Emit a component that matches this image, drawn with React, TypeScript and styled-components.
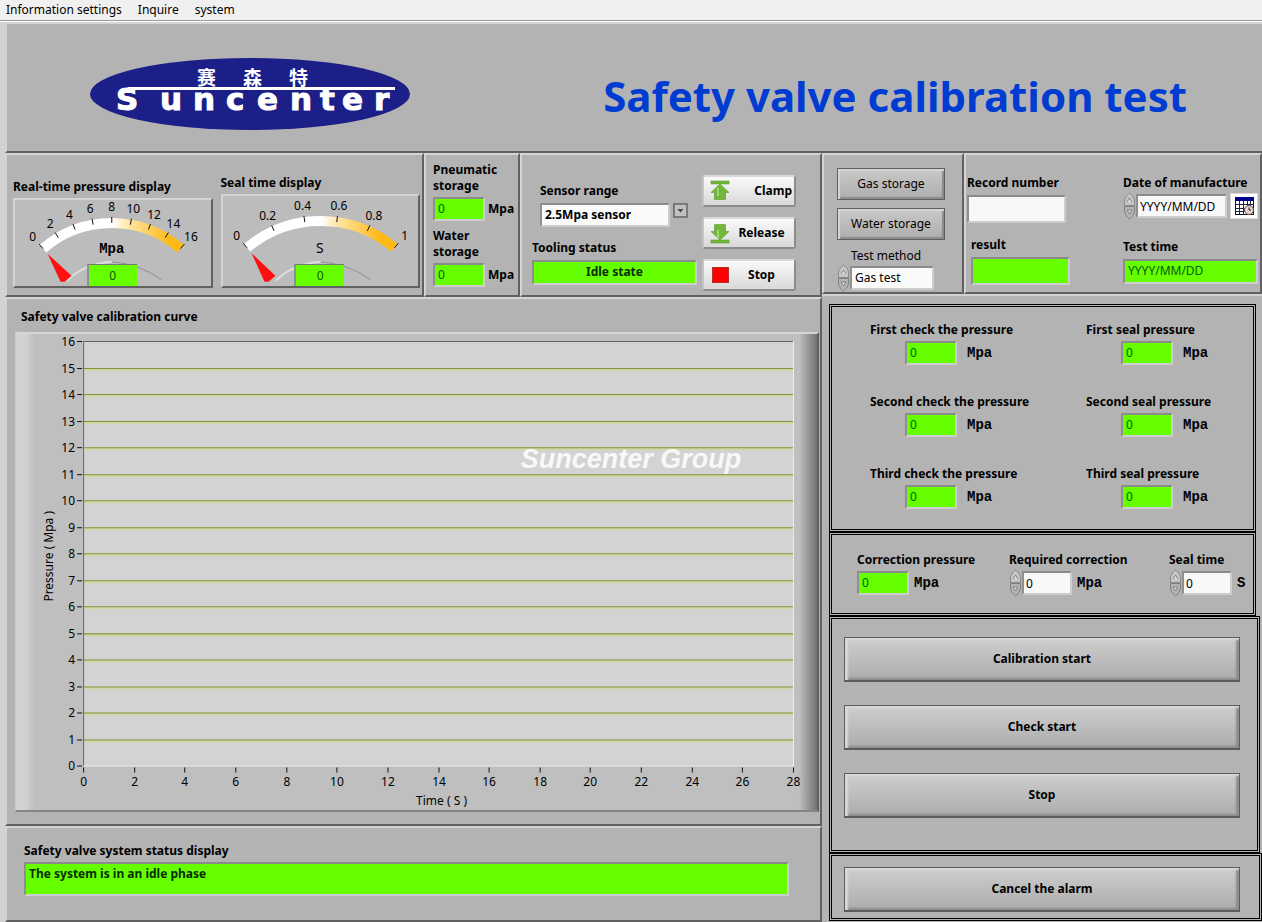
import React from "react";
import styled, { createGlobalStyle, css } from "styled-components";

const GREEN = "#66ff00";
const FONT = '"Noto Sans", "Noto Sans CJK SC", sans-serif';
const MONO = '"Liberation Mono", monospace';

const GlobalStyle = createGlobalStyle`
  * { box-sizing: border-box; }
  body { margin: 0; background: #b3b3b3; font: 12px/16px ${FONT}; color: #000; }
  button, input, select, output { font: inherit; color: inherit; }
`;

const Page = styled.div`
  display: flex;
  flex-direction: column;
  min-height: 100vh;
`;

const MenuBar = styled.nav`
  display: flex;
  gap: 16px;
  height: 21px;
  padding: 0 6px;
  background: #f0f0f0;
  border-bottom: 1px solid #9a9a9a;
`;

const MenuItem = styled.button`
  padding: 0;
  border: 0;
  background: none;
  line-height: 18px;
`;

const bevel = css`
  border: 2px solid;
  border-color: #d4d4d4 #616161 #616161 #d4d4d4;
`;

const Body = styled.main`
  flex: 1;
  display: flex;
  flex-direction: column;
  padding-left: 5px;
  border-top: 1px solid #ffffff;
  background: linear-gradient(90deg, #d2d2d2 5px, #b3b3b3 5px);
`;

const Header = styled.header`
  ${bevel}
  display: flex;
  align-items: center;
  justify-content: space-between;
  height: 131px;
  padding: 12px 75px 0 83px;
  border-right: 0;
`;

const Title = styled.h1`
  margin: 0;
  padding-top: 4px;
  font-size: 42px;
  line-height: 56px;
  font-weight: 700;
  color: #003cd2;
  white-space: nowrap;
`;

const Columns = styled.div`
  flex: 1;
  display: grid;
  grid-template-columns: minmax(0, 817fr) minmax(0, 440fr);
`;

const Column = styled.div`
  display: flex;
  flex-direction: column;
  min-width: 0;
`;

const PanelRow = styled.div<{ $height: number; $columns: string }>`
  display: grid;
  grid-template-columns: ${(p) => p.$columns};
  min-height: ${(p) => p.$height}px;
`;

const Panel = styled.section<{ $fill?: boolean; $pad: string }>`
  ${bevel}
  flex: ${(p) => (p.$fill ? "1" : "none")};
  min-width: 0;
  padding: ${(p) => p.$pad};
`;

const GaugesPanel = styled(Panel)`
  display: flex;
  align-items: flex-end;
  gap: 8px;
`;

const SensorPanel = styled(Panel)`
  display: flex;
  align-items: flex-start;
  gap: 5px;
`;

const Caption = styled.label<{ $light?: boolean }>`
  display: block;
  font-weight: ${(p) => (p.$light ? 400 : 700)};
  line-height: 16px;
  white-space: nowrap;
`;

const sunken = css`
  border: 2px solid;
  border-color: #8b8b8b #cdcdcd #cdcdcd #8f8f8f;
  border-radius: 0;
`;

const Readout = styled.output<{ $width?: string; $height?: number; $bold?: boolean; $center?: boolean }>`
  ${sunken}
  display: block;
  flex: none;
  width: ${(p) => p.$width ?? "52px"};
  height: ${(p) => p.$height ?? 24}px;
  padding: 1px 3px;
  background: ${GREEN};
  color: ${(p) => (p.$bold ? "#062d00" : "#0a5a0a")};
  font-weight: ${(p) => (p.$bold ? 700 : 400)};
  line-height: 18px;
  text-align: ${(p) => (p.$center ? "center" : "left")};
`;

const TextField = styled.input<{ $width: string; $height?: number }>`
  ${sunken}
  flex: none;
  width: ${(p) => p.$width};
  height: ${(p) => p.$height ?? 24}px;
  padding: 0 2px;
  background: #f8f8f8;
`;

const Picker = styled.select<{ $width: string; $bold?: boolean }>`
  ${sunken}
  appearance: none;
  width: ${(p) => p.$width};
  height: 24px;
  padding: 0 3px;
  background: #fafafa;
  font-weight: ${(p) => (p.$bold ? 700 : 400)};
`;

const Unit = styled.span<{ $sans?: boolean }>`
  font: ${(p) => (p.$sans ? `700 12px/16px ${FONT}` : `700 14px/16px ${MONO}`)};
`;

const Line = styled.div<{ $gap?: number; $indent?: number; $top?: boolean }>`
  display: flex;
  align-items: ${(p) => (p.$top ? "flex-start" : "center")};
  gap: ${(p) => p.$gap ?? 0}px;
  padding-left: ${(p) => p.$indent ?? 0}px;
`;

const Stack = styled.div<{ $gap?: number; $pad?: string; $width?: string }>`
  display: flex;
  flex-direction: column;
  gap: ${(p) => p.$gap ?? 0}px;
  padding: ${(p) => p.$pad ?? "0"};
  width: ${(p) => p.$width ?? "auto"};
`;

/* Gauges */

const GaugeBlock = styled.div`
  flex: 1 1 0;
  min-width: 0;
`;

const GaugeFace = styled.div`
  ${bevel}
  position: relative;
  margin-top: 3px;
  background: #bcbcbc;

  svg { display: block; width: 100%; overflow: visible; }
`;

const GaugeValue = styled.output`
  position: absolute;
  bottom: 0;
  left: 50%;
  width: 50px;
  height: 22px;
  margin-left: -26px;
  border-top: 1px solid #777777;
  border-left: 2px solid #8f8f8f;
  background: ${GREEN};
  color: #0a5a0a;
  line-height: 22px;
  text-align: center;
`;

type GaugeProps = {
  id: string;
  title: string;
  unit: string;
  monoUnit?: boolean;
  marks: string[];
  cx: number;
  cy: number;
  radius: number;
  span: number;
  height: number;
};

function Gauge({ id, title, unit, monoUnit, marks, cx, cy, radius, span, height }: GaugeProps) {
  const at = (deg: number, r: number): [number, number] => {
    const a = (deg * Math.PI) / 180;
    return [cx + r * Math.sin(a), cy - r * Math.cos(a)];
  };
  const arc = (from: number, to: number, r: number) => {
    const [x1, y1] = at(from, r);
    const [x2, y2] = at(to, r);
    return `M${x1} ${y1}A${r} ${r} 0 0 1 ${x2} ${y2}`;
  };
  const hub = height - 24;
  const [tx, ty] = at(-span, radius - 12);
  return (
    <GaugeBlock>
      <Caption as="div" id={id}>{title}</Caption>
      <GaugeFace>
        <svg viewBox={`0 0 196 ${height}`} aria-hidden="true">
          <defs>
            <linearGradient id={`${id}-band`} gradientUnits="userSpaceOnUse" x1={cx} y1="0" x2={cx + 60} y2="0">
              <stop offset="0" stopColor="#ffffff" />
              <stop offset="0.3" stopColor="#ffe4a0" />
              <stop offset="1" stopColor="#ffb814" />
            </linearGradient>
          </defs>
          <path d={arc(-span, span, radius - 5)} fill="none" stroke={`url(#${id}-band)`} strokeWidth="10" />
          <path
            d={`M${cx - 45} ${height - 5}Q${cx - 28} ${hub + 2} ${cx} ${hub}`}
            fill="none" stroke="#dedede" strokeWidth="2"
          />
          <path
            d={`M${cx} ${hub}Q${cx + 28} ${hub + 2} ${cx + 50} ${height - 6}`}
            fill="none" stroke="#909090"
          />
          <polygon
            points={`${tx},${ty} ${tx + 13},${height - 4} ${tx + 17},${height - 4} ${tx + 24},${height - 10}`}
            fill="#ff1010"
          />
          {marks.map((mark, i) => {
            const deg = -span + (2 * span * i) / (marks.length - 1);
            const [x1, y1] = at(deg, radius + 1);
            const [x2, y2] = at(deg, radius - 5);
            const [lx, ly] = at(deg, radius + 11);
            return (
              <g key={mark}>
                <path d={`M${x1} ${y1}L${x2} ${y2}`} stroke="#111111" />
                <text x={lx} y={ly + 4} fontSize="12" textAnchor="middle">{mark}</text>
              </g>
            );
          })}
          <text
            x={97} y={height - 33} textAnchor="middle" fontSize="14"
            fontFamily={monoUnit ? MONO : FONT} fontWeight={monoUnit ? 700 : 400}
          >
            {unit}
          </text>
        </svg>
        <GaugeValue aria-labelledby={id}>0</GaugeValue>
      </GaugeFace>
    </GaugeBlock>
  );
}

/* Buttons */

const ToolButton = styled.button<{ $end?: boolean }>`
  display: flex;
  align-items: center;
  width: 94px;
  height: 32px;
  padding: 0 2px 0 5px;
  border: 2px solid;
  border-color: #d9d9d9 #8c8c8c #8c8c8c #c4c4c4;
  border-radius: 3px;
  background: linear-gradient(#fafafa, #d9d9d9);
  font-weight: 700;

  svg { flex: none; display: block; }
  span { flex: 1; text-align: ${(p) => (p.$end ? "right" : "center")}; }
`;

const StorageButton = styled.button`
  width: 108px;
  height: 32px;
  padding: 0;
  border: 1px solid #5f5f5f;
  background: linear-gradient(#c9c9c9, #adadad);
  box-shadow: inset 2px 2px 1px #d6d6d6, inset -2px -2px 1px #8a8a8a;
`;

const ActionButton = styled.button`
  width: 100%;
  height: 45px;
  padding: 0;
  border: 1px solid #5c5c5c;
  border-width: 1px 1px 2px 1px;
  background: linear-gradient(#cecece, #acacac);
  box-shadow: inset 3px 2px 2px #d8d8d8, inset -3px -2px 2px #8c8c8c;
  font-weight: 700;
`;

const CalendarButton = styled.button`
  flex: none;
  width: 28px;
  height: 26px;
  padding: 2px 4px;
  border: 1px solid #d8d8d8;
  background: #ffffff;

  svg { display: block; }
`;

const ArrowIcon = ({ down }: { down?: boolean }) => (
  <svg width="22" height="22" viewBox="0 0 22 22" aria-hidden="true">
    <g transform={down ? "matrix(1 0 0 -1 0 22)" : undefined} fill="#72b63a" stroke="#5d9c2e" strokeWidth="0.6">
      <rect x="2" y="1" width="18" height="3" />
      <path d="M11 4L20 12.500H16.500V19.500H5.500V12.500H2Z" />
    </g>
    <path d="M9 8V16" stroke="#a4d47a" strokeWidth="2" />
  </svg>
);

const StopIcon = () => (
  <svg width="22" height="22" viewBox="0 0 22 22" aria-hidden="true">
    <rect x="3.500" y="3.500" width="16" height="15" fill="#ff0000" stroke="#b83030" />
  </svg>
);

const CalendarIcon = () => (
  <svg width="19" height="20" viewBox="0 0 19 20" aria-hidden="true">
    <rect x="0.500" y="1.500" width="18" height="17" fill="#ffffff" stroke="#101030" />
    <rect x="0" y="1" width="19" height="4" fill="#000088" />
    <path d="M1 8.500H18M1 12.500H18M1 15.500H18M4.500 5V18M8.500 5V18M12.500 5V18M15.500 5V18" stroke="#222244" />
    <circle cx="14" cy="14" r="4.500" fill="#ead2cc" stroke="#6a5555" />
    <path d="M14 11.500V14H16" fill="none" stroke="#222222" />
  </svg>
);

const SpinnerSvg = styled.svg`
  display: block;
  flex: none;
`;

const Spinner = () => (
  <SpinnerSvg width="13" height="28" viewBox="0 0 13 28" aria-hidden="true">
    <path d="M6.500 1C9 3 11.500 6 11.500 9V13.500H1.500V9C1.500 6 4 3 6.500 1Z" fill="#c6c6c6" stroke="#8a8a8a" />
    <path d="M6.500 27C9 25 11.500 22 11.500 19V14.500H1.500V19C1.500 22 4 25 6.500 27Z" fill="#b4b4b4" stroke="#808080" />
    <path d="M4 10L6.500 6L9 10M4 18H9L6.500 22Z" fill="#dedede" stroke="#6f6f6f" strokeWidth="0.8" />
  </SpinnerSvg>
);

const DropIcon = () => (
  <SpinnerSvg width="15" height="15" viewBox="0 0 15 15" aria-hidden="true">
    <rect x="1" y="1" width="13" height="13" fill="#c0c0c0" stroke="#666666" strokeWidth="1.500" />
    <path d="M4.500 6H10.500L7.500 9.500Z" fill="#444444" />
  </SpinnerSvg>
);

/* Logo */

const Logo = () => (
  <svg width="320" height="72" viewBox="0 0 320 72" role="img" aria-label="Suncenter">
    <ellipse cx="160" cy="36" rx="160" ry="36" fill="#1c1f88" />
    <rect x="38" y="29" width="267" height="3" fill="#ffffff" />
    <text x="107 153 199" y="27" fill="#ffffff" fontSize="19" fontWeight="700" fontFamily='"Noto Sans CJK SC", sans-serif'>
      赛森特
    </text>
    <text
      x="26 70 103 136 167 200 230 252 284" y="52" fill="#ffffff" stroke="#ffffff" strokeWidth="1"
      fontSize="31" fontWeight="700" fontFamily='"DejaVu Sans", sans-serif'
    >
      Suncenter
    </text>
  </svg>
);

/* Calibration curve */

const ChartFrame = styled.div`
  border: solid;
  border-width: 2px 2px 2px 1px;
  border-color: #d6d6d6 #5e5e5e #858585 #cccccc;
  background: linear-gradient(90deg, #d2d2d2 10px, #bfbfbf 18px, #bfbfbf calc(100% - 18px), #727272);

  svg { display: block; width: 100%; }
`;

const PLOT = { left: 67, top: 7, right: 776, bottom: 431 };

function Chart() {
  const yMarks = Array.from({ length: 17 }, (_, i) => i);
  const xMarks = Array.from({ length: 15 }, (_, i) => i * 2);
  const yAt = (v: number) => Math.round(PLOT.bottom - (v / 16) * (PLOT.bottom - PLOT.top)) + 0.5;
  const xAt = (v: number) => Math.round(PLOT.left + (v / 28) * (PLOT.right - PLOT.left)) + 0.5;
  return (
    <ChartFrame>
      <svg viewBox="0 0 800 475" role="img" aria-label="Safety valve calibration curve">
        <rect x={PLOT.left} y={PLOT.top} width={PLOT.right - PLOT.left} height={PLOT.bottom - PLOT.top} fill="#d3d3d3" />
        {yMarks.map((v) => (
          <g key={v}>
            {v > 0 && v < 16 && (
              <>
                <path d={`M${PLOT.left} ${yAt(v) + 1}H${PLOT.right}`} stroke="#d2d6a8" strokeWidth="3" />
                <path d={`M${PLOT.left} ${yAt(v)}H${PLOT.right}`} stroke="#849340" />
              </>
            )}
            <path d={`M${PLOT.left - 6} ${yAt(v)}h5`} stroke="#111111" />
            <text x={PLOT.left - 8} y={yAt(v) + 4} fontSize="12" textAnchor="end">{v}</text>
          </g>
        ))}
        <path d={`M${PLOT.left + 0.5} ${PLOT.bottom}V${PLOT.top + 0.5}H${PLOT.right}`} fill="none" stroke="#666666" />
        <path d={`M${PLOT.left + 1} ${PLOT.bottom + 0.5}H${PLOT.right + 0.5}V${PLOT.top}`} fill="none" stroke="#efefef" />
        {xMarks.map((v) => (
          <g key={v}>
            <path d={`M${xAt(v)} ${PLOT.bottom + 2}v5`} stroke="#111111" />
            <text x={xAt(v)} y={PLOT.bottom + 20} fontSize="12" textAnchor="middle">{v}</text>
          </g>
        ))}
        <text x="425" y="470" fontSize="12" textAnchor="middle">Time ( S )</text>
        <text transform="translate(37 222) rotate(-90)" fontSize="12" textAnchor="middle">Pressure ( Mpa )</text>
        <text
          x="504" y="134" fontSize="27" fontWeight="700" fontStyle="italic" fill="#f8f8f8"
          fontFamily='"Liberation Sans", sans-serif'
        >
          Suncenter Group
        </text>
      </svg>
    </ChartFrame>
  );
}

/* Boxes on the right */

const Box = styled.section<{ $pad: string; $inset: number }>`
  margin-right: ${(p) => p.$inset}px;
  padding: ${(p) => p.$pad};
  border: 3px double #000000;
`;

const ReadingGrid = styled(Box)`
  display: grid;
  grid-template-columns: minmax(0, 216fr) minmax(0, 167fr);
  row-gap: 29px;
`;

const CorrectionGrid = styled(Box)`
  display: grid;
  grid-template-columns: minmax(0, 152fr) minmax(0, 160fr) minmax(0, 84fr);
`;

const ButtonBox = styled(Box)`
  display: flex;
  flex-direction: column;
  gap: 23px;
`;

const LowerRight = styled.div`
  flex: 1;
  padding: 8px 0 0 7px;
  border-top: 2px solid #d0d0d0;
`;

const ReadingRow = styled.div`
  margin-top: 3px;
`;

const readings: [string, string][] = [
  ["check-1", "First check the pressure"],
  ["seal-1", "First seal pressure"],
  ["check-2", "Second check the pressure"],
  ["seal-2", "Second seal pressure"],
  ["check-3", "Third check the pressure"],
  ["seal-3", "Third seal pressure"],
];

export default function App() {
  return (
    <Page>
      <GlobalStyle />
      <MenuBar>
        <MenuItem>Information settings</MenuItem>
        <MenuItem>Inquire</MenuItem>
        <MenuItem>system</MenuItem>
      </MenuBar>
      <Body>
        <Header>
          <Logo />
          <Title>Safety valve calibration test</Title>
        </Header>
        <Columns>
          <Column>
            <PanelRow $height={144} $columns="minmax(0, 419fr) minmax(0, 96fr) minmax(0, 302fr)">
              <GaugesPanel $pad="0 2px 7px 6px">
                <Gauge
                  id="pressure" title="Real-time pressure display" unit="Mpa" monoUnit
                  marks={["0", "2", "4", "6", "8", "10", "12", "14", "16"]}
                  cx={97} cy={128} radius={110} span={41} height={86}
                />
                <Gauge
                  id="seal" title="Seal time display" unit="S"
                  marks={["0", "0.2", "0.4", "0.6", "0.8", "1"]}
                  cx={98} cy={140} radius={120} span={40} height={90}
                />
              </GaugesPanel>
              <Panel $pad="7px 0 0 7px">
                <Stack $gap={7}>
                  <div>
                    <Caption htmlFor="pneumatic">Pneumatic<br />storage</Caption>
                    <ReadingRow>
                      <Line $gap={3}><Readout id="pneumatic">0</Readout><Unit $sans>Mpa</Unit></Line>
                    </ReadingRow>
                  </div>
                  <div>
                    <Caption htmlFor="water">Water<br />storage</Caption>
                    <ReadingRow>
                      <Line $gap={3}><Readout id="water">0</Readout><Unit $sans>Mpa</Unit></Line>
                    </ReadingRow>
                  </div>
                </Stack>
              </Panel>
              <SensorPanel $pad="20px 0 0 10px">
                <Stack $width="165px" $gap={13} $pad="8px 0 0">
                  <Stack $gap={4} $pad="0 0 0 8px">
                    <Caption htmlFor="sensor">Sensor range</Caption>
                    <Line $gap={3} $top>
                      <Picker id="sensor" $width="130px" $bold><option>2.5Mpa sensor</option></Picker>
                      <DropIcon />
                    </Line>
                  </Stack>
                  <Stack $gap={4}>
                    <Caption htmlFor="tooling">Tooling status</Caption>
                    <Readout id="tooling" $width="165px" $height={25} $bold $center>Idle state</Readout>
                  </Stack>
                </Stack>
                <Stack $gap={10}>
                  <ToolButton $end><ArrowIcon /><span>Clamp</span></ToolButton>
                  <ToolButton><ArrowIcon down /><span>Release</span></ToolButton>
                  <ToolButton><StopIcon /><span>Stop</span></ToolButton>
                </Stack>
              </SensorPanel>
            </PanelRow>
            <Panel $fill $pad="10px 1px 10px 8px">
              <Stack $gap={7}>
                <Line $indent={6}><Caption as="div">Safety valve calibration curve</Caption></Line>
                <Chart />
              </Stack>
            </Panel>
            <Panel $pad="15px 31px 24px 17px">
              <Stack $gap={3}>
                <Caption htmlFor="status">Safety valve system status display</Caption>
                <Readout id="status" $width="100%" $height={34} $bold>The system is in an idle phase</Readout>
              </Stack>
            </Panel>
          </Column>
          <Column>
            <PanelRow $height={140} $columns="minmax(0, 142fr) minmax(0, 298fr)">
              <Panel $pad="13px 0 0 13px">
                <Stack $gap={8}>
                  <StorageButton>Gas storage</StorageButton>
                  <StorageButton>Water storage</StorageButton>
                  <div>
                    <Line $indent={14}><Caption htmlFor="method" $light>Test method</Caption></Line>
                    <Line>
                      <Spinner />
                      <Picker id="method" $width="84px"><option>Gas test</option></Picker>
                    </Line>
                  </div>
                </Stack>
              </Panel>
              <Panel $pad="20px 2px 0 1px">
                <Line $top>
                  <Stack $width="156px" $gap={14}>
                    <Stack $gap={4}>
                      <Caption htmlFor="record">Record number</Caption>
                      <TextField id="record" $width="99px" $height={28} />
                    </Stack>
                    <Stack $gap={4} $pad="0 0 0 4px">
                      <Caption htmlFor="result">result</Caption>
                      <Readout id="result" $width="99px" $height={28} />
                    </Stack>
                  </Stack>
                  <Stack $gap={19}>
                    <Stack $gap={1}>
                      <Caption htmlFor="made">Date of manufacture</Caption>
                      <Line>
                        <Spinner />
                        <TextField id="made" $width="91px" defaultValue="YYYY/MM/DD" />
                        <Line $indent={3}>
                          <CalendarButton aria-label="Choose date"><CalendarIcon /></CalendarButton>
                        </Line>
                      </Line>
                    </Stack>
                    <Stack $gap={4}>
                      <Caption htmlFor="tested">Test time</Caption>
                      <Readout id="tested" $width="135px" $height={25}>YYYY/MM/DD</Readout>
                    </Stack>
                  </Stack>
                </Line>
              </Panel>
            </PanelRow>
            <LowerRight>
              <ReadingGrid $inset={6} $pad="15px 0 20px 38px">
                {readings.map(([id, title]) => (
                  <div key={id}>
                    <Caption htmlFor={id}>{title}</Caption>
                    <ReadingRow>
                      <Line $gap={10} $indent={35}><Readout id={id}>0</Readout><Unit>Mpa</Unit></Line>
                    </ReadingRow>
                  </div>
                ))}
              </ReadingGrid>
              <CorrectionGrid $inset={6} $pad="17px 0 16px 25px">
                <Stack $gap={3}>
                  <Caption htmlFor="correction">Correction pressure</Caption>
                  <Line $gap={5}><Readout id="correction">0</Readout><Unit>Mpa</Unit></Line>
                </Stack>
                <Stack $gap={1}>
                  <Caption htmlFor="required">Required correction</Caption>
                  <Line $gap={5}>
                    <Line><Spinner /><TextField id="required" $width="50px" defaultValue="0" /></Line>
                    <Unit>Mpa</Unit>
                  </Line>
                </Stack>
                <Stack $gap={1}>
                  <Caption htmlFor="seal-time">Seal time</Caption>
                  <Line $gap={5}>
                    <Line><Spinner /><TextField id="seal-time" $width="50px" defaultValue="0" /></Line>
                    <Unit>S</Unit>
                  </Line>
                </Stack>
              </CorrectionGrid>
              <ButtonBox $inset={2} $pad="18px 17px 32px 12px">
                <ActionButton>Calibration start</ActionButton>
                <ActionButton>Check start</ActionButton>
                <ActionButton>Stop</ActionButton>
              </ButtonBox>
              <ButtonBox $inset={0} $pad="11px 19px 6px 12px">
                <ActionButton>Cancel the alarm</ActionButton>
              </ButtonBox>
            </LowerRight>
          </Column>
        </Columns>
      </Body>
    </Page>
  );
}
